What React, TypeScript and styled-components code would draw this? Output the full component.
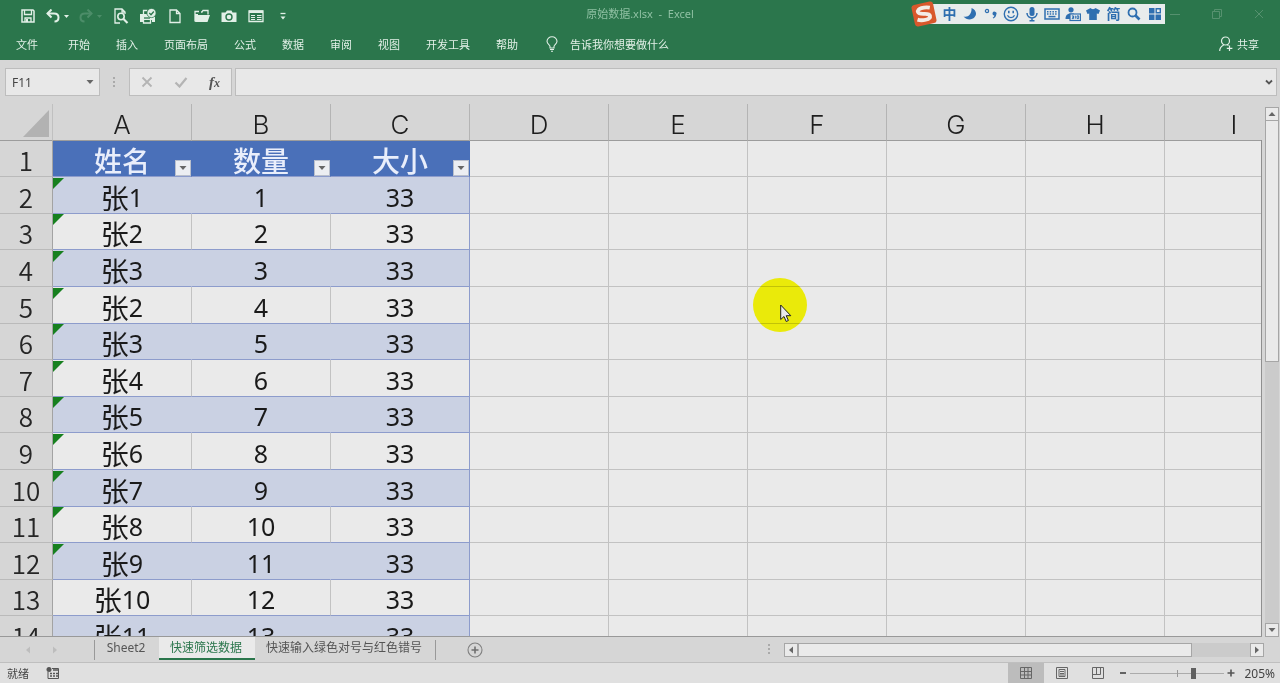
import React from 'react';
import styled, { createGlobalStyle, css } from 'styled-components';

const GREEN = '#2b764c';
const CHROME = '#d6d6d6';
const PAPER = '#eaeaea';
const LINE = '#c2c2c2';
const TABLE_LINE = '#8d9ccc';
const UI_FONT = '"Noto Sans", "Noto Sans CJK SC", sans-serif';
const HEAD_W = 53;
const COL_W = 139;

const Global = createGlobalStyle`
  *, *::before, *::after { box-sizing: border-box; }
  body { margin: 0; background: ${CHROME}; font-family: ${UI_FONT}; }
  button, input { font: inherit; color: inherit; }
  button { padding: 0; border: 0; background: none; display: flex; align-items: center; justify-content: center; }
  svg { display: block; flex: none; }
`;

const Window = styled.div`
  position: relative;
  display: flex;
  flex-direction: column;
  height: 100vh;
  overflow: hidden;
  font-size: 11px;
  color: #333;
`;

/* ---------- title bar and ribbon ---------- */

const Header = styled.header`
  flex: none;
  background: ${GREEN};
  color: #e2f0e7;
`;

const TitleBar = styled.div`
  display: grid;
  grid-template-columns: 1fr auto 1fr;
  height: 30px;
`;

const QuickAccess = styled.div`
  display: flex;
  padding: 2px 0 0 14px;
`;

const QuickButton = styled.button<{ $wide?: boolean; $dim?: boolean }>`
  width: ${p => (p.$wide ? 33 : 27)}px;
  height: 28px;
  ${p => p.$dim && css`color: #4c8d69;`}
`;

const Title = styled.h1`
  margin: 0;
  font-size: 11px;
  font-weight: 400;
  line-height: 28px;
  white-space: pre;
  color: #8fc0a3;
`;

const WindowButtons = styled.div`
  display: flex;
  justify-content: flex-end;
  color: #56916f;
`;

const WindowButton = styled.button`
  width: 42px;
  height: 28px;
`;

const Ribbon = styled.nav`
  display: flex;
  height: 30px;
  padding: 0 7px 0 3px;
`;

const RibbonTab = styled.button`
  height: 28px;
  padding: 0 13px;
`;

const FileTab = styled(RibbonTab)`
  margin-right: 4px;
`;

const TellMe = styled.button`
  height: 28px;
  gap: 12px;
  padding: 0 15px;
`;

const Share = styled.button`
  height: 28px;
  gap: 4px;
  margin-left: auto;
  padding: 0 14px;
`;

/* ---------- input method bar ---------- */

const ImeBar = styled.div`
  position: absolute;
  top: 0;
  right: 115px;
  display: flex;
  align-items: center;
  height: 28px;
  color: #2f6fb0;
`;

const ImeLogo = styled.button`
  position: relative;
  z-index: 1;
  margin-right: -13px;
`;

const ImeKeys = styled.div`
  display: flex;
  align-items: center;
  height: 20px;
  padding-left: 15px;
  background: #e8ecec;
`;

const ImeKey = styled.button`
  width: 21px;
  height: 20px;
  font-size: 14px;
  font-weight: 700;
  line-height: 20px;
  &:nth-child(even) { width: 20px; }
`;

/* ---------- formula bar ---------- */

const FormulaBar = styled.div`
  flex: none;
  display: flex;
  align-items: center;
  height: 44px;
  padding: 0 3px 0 5px;
`;

const Field = styled.div`
  display: flex;
  align-items: center;
  height: 28px;
  border: 1px solid #bdbdbd;
  background: #e8e8e8;
`;

const NameBox = styled(Field)`
  width: 95px;
`;

const FunctionBox = styled(Field)`
  width: 103px;
  margin-right: 3px;
`;

const FormulaBox = styled(Field)`
  flex: 1;
  min-width: 0;
`;

const FieldInput = styled.input`
  flex: 1;
  min-width: 0;
  height: 24px;
  padding: 0 6px;
  border: 0;
  outline: 0;
  background: transparent;
  font-size: 12px;
  color: #444;
`;

const FieldButton = styled.button<{ $w: number }>`
  width: ${p => p.$w}px;
  height: 26px;
`;

const Grip = styled.span`
  display: flex;
  justify-content: center;
  width: 29px;
`;

const FxMark = styled.span`
  font: italic 700 15px/20px "Liberation Serif", serif;
  color: #555;
  small { font-size: 12px; }
`;

/* ---------- sheet ---------- */

const SheetArea = styled.main`
  display: flex;
  flex: 1;
  min-height: 0;
`;

const GridPane = styled.div`
  position: relative;
  flex: 1;
  min-width: 0;
  overflow: hidden;
  margin-right: 3px;
  border-bottom: 1px solid #999;
  &::after {
    content: '';
    position: absolute;
    top: 36px;
    right: 0;
    bottom: 0;
    width: 1px;
    background: #8f8f8f;
  }
`;

const Grid = styled.table`
  width: ${HEAD_W + 9 * COL_W}px;
  table-layout: fixed;
  border-collapse: separate;
  border-spacing: 0;
  th, td { padding: 0; text-align: center; vertical-align: middle; }
`;

const Corner = styled.th`
  width: ${HEAD_W}px;
  height: 37px;
  border-right: 1px solid #c0c0c0;
  border-bottom: 1px solid #9c9c9c;
`;

const CornerButton = styled.button`
  width: 52px;
  height: 36px;
`;

const HeadLabel = styled.span`
  display: block;
  padding-top: 3px;
`;

const ColumnHead = styled.th`
  width: ${COL_W}px;
  height: 37px;
  border-right: 1px solid #b4b4b4;
  border-bottom: 1px solid #9c9c9c;
  font: 300 26px/30px Inter, sans-serif;
  color: #1e1e1e;
  ${HeadLabel} { padding-top: 6px; }
`;

const Row = styled.tr<{ $short: boolean }>`
  height: ${p => (p.$short ? 36 : 37)}px;
`;

const RowHead = styled.th`
  border-right: 1px solid #a3a3a3;
  border-bottom: 1px solid #bababa;
  font: 350 26px/32px "Noto Sans CJK SC", sans-serif;
  color: #262626;
`;

const Cell = styled.td<{ $band?: boolean; $table?: boolean; $edge?: boolean }>`
  border-right: 1px solid ${p => (p.$edge ? TABLE_LINE : p.$band ? '#cad1e3' : LINE)};
  border-bottom: 1px solid ${p => (p.$table ? TABLE_LINE : LINE)};
  background: ${p => (p.$band ? '#cad1e3' : PAPER)};
  color: #1a1a1a;
`;

const CellBody = styled.div`
  position: relative;
  display: flex;
  align-items: center;
  justify-content: center;
  height: 35px;
  padding-top: 4px;
  font: 400 25px/31px "Noto Sans", sans-serif;
`;

const Han = styled.span`
  font: 400 28px/31px "Noto Sans CJK SC", sans-serif;
`;

const ErrorMark = styled.i`
  position: absolute;
  top: 0;
  left: 0;
  border-top: 11px solid #17801f;
  border-right: 11px solid transparent;
`;

const TableHead = styled.td`
  border-right: 1px solid #4a70b9;
  border-bottom: 1px solid ${TABLE_LINE};
  background: #4a70b9;
  color: #e9eefb;
`;

const TableHeadBody = styled.div`
  position: relative;
  height: 35px;
  padding-top: 4px;
  font: 500 28px/31px "Noto Sans CJK SC", sans-serif;
`;

const FilterButton = styled.button`
  position: absolute;
  right: 0;
  bottom: 0;
  width: 16px;
  height: 16px;
  border: 1px solid #b9bfcc;
  background: #eceef2;
`;

/* ---------- scroll bars ---------- */

const VScroll = styled.div`
  display: flex;
  flex-direction: column;
  width: 14px;
  margin: 3px 1px 0 0;
  background: #cbcbcb;
`;

const ScrollButton = styled.button`
  flex: none;
  width: 14px;
  height: 14px;
  border: 1px solid #a6a6a6;
  background: ${PAPER};
`;

const VThumb = styled.div`
  flex: 12;
  border: 1px solid #a6a6a6;
  border-top: 0;
  background: ${PAPER};
`;

const VTrack = styled.div`
  flex: 13;
`;

const HScroll = styled.div`
  display: flex;
  width: 480px;
  height: 14px;
  margin-right: 16px;
  background: #cbcbcb;
`;

const HThumb = styled.div`
  width: 394px;
  margin-right: auto;
  border: 1px solid #a6a6a6;
  background: ${PAPER};
`;

/* ---------- sheet tabs and status bar ---------- */

const TabBar = styled.div`
  flex: none;
  display: flex;
  align-items: center;
  height: 26px;
  border-bottom: 1px solid #bfbfbf;
`;

const TabArrows = styled.div`
  display: flex;
  align-items: center;
  width: 95px;
  height: 20px;
  padding: 0 14px;
  border-right: 1px solid #999;
`;

const ArrowButton = styled.button`
  width: 27px;
  height: 20px;
`;

const SheetTab = styled.button<{ $active?: boolean }>`
  align-self: flex-start;
  min-width: 64px;
  height: 23px;
  padding: 0 13px 0 11px;
  font-size: 12px;
  line-height: 20px;
  color: #555;
  border-bottom: 2px solid transparent;
  ${p => p.$active && css`
    background: ${PAPER};
    border-bottom-color: ${GREEN};
    color: ${GREEN};
  `}
`;

const TabDivider = styled.span`
  width: 1px;
  height: 20px;
  background: #999;
`;

const AddSheet = styled.button`
  width: 77px;
  height: 24px;
  margin-right: auto;
`;

const StatusBar = styled.footer`
  flex: none;
  display: flex;
  align-items: center;
  height: 20px;
  padding: 0 5px 0 7px;
  background: #e0e0e0;
  color: #444;
`;

const MacroButton = styled.button`
  width: 24px;
  height: 20px;
  margin: 0 auto 0 12px;
`;

const ViewButton = styled.button<{ $active?: boolean }>`
  width: 36px;
  height: 20px;
  background: ${p => (p.$active ? '#bcbcbc' : 'transparent')};
`;

const ZoomStep = styled.button`
  width: 14px;
  height: 20px;
`;

const ZoomSlider = styled.input`
  appearance: none;
  width: 94px;
  height: 20px;
  margin: 0;
  background: linear-gradient(#999, #999) center / 1px 7px no-repeat,
    linear-gradient(#ababab, #ababab) center / 100% 1px no-repeat;
  &::-webkit-slider-thumb {
    appearance: none;
    width: 5px;
    height: 11px;
    background: #606060;
  }
`;

const ZoomValue = styled.button`
  width: 37px;
  height: 20px;
  font-size: 12px;
  justify-content: flex-end;
`;

/* ---------- icons ---------- */

const Svg = ({ w = 16, h = 16, children }: { w?: number; h?: number; children: React.ReactNode }) => (
  <svg width={w} height={h} viewBox={`0 0 ${w} ${h}`} fill="none" stroke="currentColor" strokeWidth="1.3" aria-hidden="true">
    {children}
  </svg>
);

const Caret = ({ dir = 'down', color = '#666' }: { dir?: 'down' | 'up' | 'left' | 'right'; color?: string }) => {
  const d = { down: 'M.500 2h7L4 6z', up: 'M.500 6h7L4 2z', left: 'M6 .500v7L2 4z', right: 'M2 .500v7L6 4z' }[dir];
  return (
    <svg width="8" height="8" viewBox="0 0 8 8" fill={color} aria-hidden="true">
      <path d={d} />
    </svg>
  );
};

const Dots = () => (
  <svg width="3" height="11" viewBox="0 0 3 11" fill="#aaa" aria-hidden="true">
    <path d="M0 0h2v2H0zM0 4h2v2H0zM0 8h2v2H0z" />
  </svg>
);

const SaveIcon = () => (
  <Svg>
    <path d="M2 2h11l1 1V14H2z" strokeWidth="1.500" />
    <path d="M4.500 2v4.500h7V2M5 14v-4h6v4" />
    <path d="M6 11h2v3H6z" fill="currentColor" stroke="none" />
  </Svg>
);

const UndoIcon = ({ flip }: { flip?: boolean }) => (
  <Svg w={24} h={14}>
    <g transform={flip ? 'translate(14 0) scale(-1 1)' : undefined}>
      <path d="M1.500 4.500h6.500c3 0 4.500 1.800 4.500 4s-1.500 4-4 4" strokeWidth="2" />
      <path d="M5.500 .500l-4 4 4 4" strokeWidth="2" />
    </g>
    <path d="M18 6h5l-2.500 3z" fill="currentColor" stroke="none" />
  </Svg>
);

const PreviewIcon = () => (
  <Svg>
    <path d="M7 15H2V1h7l3 3v2M9 1v3h3" />
    <circle cx="8" cy="8.500" r="3.200" strokeWidth="1.600" />
    <path d="M10.500 11l4 4" strokeWidth="2.200" />
  </Svg>
);

const PrintIcon = () => (
  <Svg w={18} h={16}>
    <path d="M1 6h8l2 3h5v5h-3v-2H4v2H1z" fill="currentColor" stroke="none" />
    <path d="M4.500 6V2.500h4M4.500 11.500v3.500h7v-3.500" />
    <path d="M5 10h6" stroke={GREEN} />
    <circle cx="12.500" cy="5" r="4.600" fill="currentColor" stroke={GREEN} strokeWidth=".8" />
    <path d="M10.300 5l1.700 1.700 2.800-3.200" stroke={GREEN} />
  </Svg>
);

const NewIcon = () => (
  <Svg>
    <path d="M3 2h6.500L13 5.500V14.500H3zM9.500 2v3.500H13" />
  </Svg>
);

const OpenIcon = () => (
  <Svg>
    <path d="M1 13.500V3.500h4M7 4h1l1-1.500h5v4" />
    <path d="M1 6h3v2L1 13.500zM3.800 7H16l-2.500 7H1z" fill="currentColor" stroke="none" />
  </Svg>
);

const CameraIcon = () => (
  <Svg>
    <path d="M.500 4.500h4L6 2.500h4.500l1 2h4V14H.500z" fill="currentColor" stroke="none" />
    <circle cx="8" cy="9" r="3" stroke={GREEN} strokeWidth="1.400" />
  </Svg>
);

const FormIcon = () => (
  <Svg>
    <path d="M1 3h14v10.500H1z" />
    <path d="M1 2.500h14v2.500H1z" fill="currentColor" stroke="none" />
    <path d="M3 7.500h4M3 9.500h4M3 11.500h4M9 7.500h4.500M9 9.500h4.500M9 11.500h4.500" strokeWidth="1.200" />
  </Svg>
);

const MoreIcon = () => (
  <Svg w={8} h={10}>
    <path d="M1.500 2.500h5" />
    <path d="M1.500 5.500h5L4 8.500z" fill="currentColor" stroke="none" />
  </Svg>
);

const BulbIcon = () => (
  <Svg w={12} h={16}>
    <path d="M4 12v-1.500C4 9 1 8 1 5.300a5 4.600 0 0 1 10 0C11 8 8 9 8 10.500V12zM4 13.500h4M5 15.300h2" strokeWidth="1.100" />
  </Svg>
);

const ShareIcon = () => (
  <Svg w={14} h={16}>
    <circle cx="6.500" cy="5" r="4" strokeWidth="1.200" />
    <path d="M.700 15c0-3.500 1.800-5 4-6M8 8.500l1.500 1M10.500 9.500v5.500M7.800 12.300h5.600" strokeWidth="1.200" />
  </Svg>
);

const MoonIcon = () => (
  <Svg w={14} h={14}>
    <path d="M8.500 1c4.300 1.500 6 6 3 9.300C8.800 13.300 3.500 13.300 .500 9.500c5 1.500 8.500-3 8-8.500z" fill="currentColor" stroke="none" />
  </Svg>
);

const PunctIcon = () => (
  <Svg w={14} h={14}>
    <circle cx="3" cy="4" r="1.600" />
    <path d="M8.500 6.500a2 2 0 1 1 3.800 1c-.200 2-1.300 3.200-3 4l-.600-.800c1-.600 1.500-1.300 1.600-2.200-1 0-1.800-.900-1.800-2z" fill="currentColor" stroke="none" />
  </Svg>
);

const SmileIcon = () => (
  <Svg>
    <circle cx="8" cy="8" r="6.700" strokeWidth="1.400" />
    <path d="M5.800 4.800v2.400M10.200 4.800v2.400" strokeWidth="1.600" />
    <path d="M4.500 9.300c1.200 3 5.800 3 7 0" />
  </Svg>
);

const MicIcon = () => (
  <Svg w={12} h={16}>
    <rect x="3.500" y="1" width="5" height="9" rx="2.500" fill="currentColor" stroke="none" />
    <path d="M1 7c0 6.500 10 6.500 10 0M6 12v3M3.500 14.800h5" strokeWidth="1.500" />
  </Svg>
);

const KeyboardIcon = () => (
  <Svg>
    <rect x="1" y="3" width="14" height="10" strokeWidth="1.500" />
    <path d="M3 5.800h10M3 8h10" strokeDasharray="1.500 1.200" strokeWidth="1.400" />
    <path d="M4.500 10.600h7" strokeWidth="1.500" />
  </Svg>
);

const SkinUserIcon = () => (
  <Svg>
    <circle cx="6" cy="3.800" r="2.600" fill="currentColor" stroke="none" />
    <path d="M.500 13c0-4 2-5.500 5.500-5.500h3V13z" fill="currentColor" stroke="none" />
    <rect x="5" y="8" width="10.500" height="6.500" fill="#e8ecec" strokeWidth="1.200" />
    <path d="M6.800 9.900h1.700v2.700H6.800M7 11.200h1.500M10.300 9.700v3M12 9.900h1.700v2.700H12z" strokeWidth="1" />
  </Svg>
);

const ShirtIcon = () => (
  <Svg w={14} h={14}>
    <path d="M4.500 1c1 1.500 4 1.500 5 0L14 3.500 12.500 7l-1.700-.500V13H3.200V6.500L1.500 7 0 3.500z" fill="currentColor" stroke="none" />
  </Svg>
);

const SearchIcon = () => (
  <Svg w={14} h={14}>
    <circle cx="5.500" cy="5.500" r="4" strokeWidth="1.800" />
    <path d="M8.500 8.500l4 4" strokeWidth="2.600" />
  </Svg>
);

const TilesIcon = () => (
  <Svg w={14} h={14}>
    <path d="M1 1h5.500v5.500H1zM1 7.500h5.500V13H1zM7.500 7.500H13V13H7.500z" fill="currentColor" stroke="none" />
    <path d="M8.200 1.700h4.100v4.100H8.200z" strokeWidth="1.400" />
  </Svg>
);

const SogouIcon = () => (
  <Svg w={26} h={26}>
    <g transform="rotate(-12 13 13)" stroke="none">
      <rect x="2" y="2" width="22" height="22" rx="3" fill="#d9582c" />
      <path d="M20 8C15 6 7 6 7.500 10s11 2 11 6-9 3.500-13 1.200" fill="none" stroke="#f4ece6" strokeWidth="3.800" />
    </g>
  </Svg>
);

/* ---------- data ---------- */

const columns = ['A', 'B', 'C', 'D', 'E', 'F', 'G', 'H', 'I'];
const headings = ['姓名', '数量', '大小'];
const people = ['1', '2', '3', '2', '3', '4', '5', '6', '7', '8', '9', '10', '11'];
const shortRows = [1, 3, 6, 8, 11, 13];
const lastFlaggedRow = 12;
const ribbonTabs = ['开始', '插入', '页面布局', '公式', '数据', '审阅', '视图', '开发工具', '帮助'];

const Blanks = () => (
  <>
    {columns.slice(3).map(c => (
      <Cell key={c} />
    ))}
  </>
);

/* ---------- pointer with its highlight ---------- */

const Spot = styled.div`
  position: absolute;
  top: 278px;
  left: 753px;
  width: 54px;
  height: 54px;
  padding: 26px 0 0 27px;
  border-radius: 50%;
  background: #ffff0a;
  mix-blend-mode: multiply;
  pointer-events: none;
`;

const Pointer = () => (
  <Spot>
    <svg width="12" height="19" viewBox="0 0 12 19" aria-hidden="true">
      <path d="M.700 1v14.500l3.300-3 2.200 5 2.200-1-2.200-4.800h4.600z" fill="#fff" stroke="#222" strokeWidth="1" />
    </svg>
  </Spot>
);

export default function App() {
  return (
    <Window>
      <Global />
      <Header>
        <TitleBar>
          <QuickAccess>
            <QuickButton aria-label="保存"><SaveIcon /></QuickButton>
            <QuickButton $wide aria-label="撤消"><UndoIcon /></QuickButton>
            <QuickButton $wide $dim aria-label="恢复"><UndoIcon flip /></QuickButton>
            <QuickButton aria-label="打印预览"><PreviewIcon /></QuickButton>
            <QuickButton aria-label="快速打印"><PrintIcon /></QuickButton>
            <QuickButton aria-label="新建"><NewIcon /></QuickButton>
            <QuickButton aria-label="打开"><OpenIcon /></QuickButton>
            <QuickButton aria-label="照相机"><CameraIcon /></QuickButton>
            <QuickButton aria-label="记录单"><FormIcon /></QuickButton>
            <QuickButton aria-label="自定义"><MoreIcon /></QuickButton>
          </QuickAccess>
          <Title>{'原始数据.xlsx  -  Excel'}</Title>
          <WindowButtons>
            <WindowButton aria-label="最小化"><Svg w={12} h={12}><path d="M1 6.500h10" strokeWidth="1" /></Svg></WindowButton>
            <WindowButton aria-label="还原"><Svg w={12} h={12}><path d="M1.500 3.500h7v7h-7zM3.500 3.500v-2h7v7h-2" strokeWidth="1" /></Svg></WindowButton>
            <WindowButton aria-label="关闭"><Svg w={12} h={12}><path d="M2 2l8 8M10 2l-8 8" strokeWidth="1" /></Svg></WindowButton>
          </WindowButtons>
        </TitleBar>
        <Ribbon>
          <FileTab>文件</FileTab>
          {ribbonTabs.map(t => (
            <RibbonTab key={t}>{t}</RibbonTab>
          ))}
          <TellMe><BulbIcon />告诉我你想要做什么</TellMe>
          <Share><ShareIcon />共享</Share>
        </Ribbon>
      </Header>

      <FormulaBar>
        <NameBox>
          <FieldInput aria-label="名称框" defaultValue="F11" />
          <FieldButton $w={18} aria-label="展开名称框"><Caret /></FieldButton>
        </NameBox>
        <Grip><Dots /></Grip>
        <FunctionBox>
          <FieldButton $w={34} aria-label="取消"><Svg w={12} h={12}><path d="M1.500 1.500l9 9M10.500 1.500l-9 9" stroke="#b4b4b4" strokeWidth="1.800" /></Svg></FieldButton>
          <FieldButton $w={34} aria-label="输入"><Svg w={14} h={12}><path d="M1.500 6.500l4 4 7-8.500" stroke="#b4b4b4" strokeWidth="2.200" /></Svg></FieldButton>
          <FieldButton $w={33}><FxMark>f<small>x</small></FxMark></FieldButton>
        </FunctionBox>
        <FormulaBox>
          <FieldInput aria-label="编辑栏" />
          <FieldButton $w={14} aria-label="展开编辑栏"><Svg w={8} h={8}><path d="M1 2.500l3 3 3-3" stroke="#555" strokeWidth="1.800" /></Svg></FieldButton>
        </FormulaBox>
      </FormulaBar>

      <SheetArea>
        <GridPane>
          <Grid>
            <thead>
              <tr>
                <Corner>
                  <CornerButton aria-label="全选">
                    <svg width="52" height="36" viewBox="0 0 52 36" aria-hidden="true">
                      <path d="M23 33L49 6v27z" fill="#b2b2b2" />
                    </svg>
                  </CornerButton>
                </Corner>
                {columns.map(c => (
                  <ColumnHead key={c} scope="col"><HeadLabel>{c}</HeadLabel></ColumnHead>
                ))}
              </tr>
            </thead>
            <tbody>
              <Row $short>
                <RowHead scope="row"><HeadLabel>1</HeadLabel></RowHead>
                {headings.map(h => (
                  <TableHead key={h}>
                    <TableHeadBody>
                      {h}
                      <FilterButton aria-label="筛选"><Caret /></FilterButton>
                    </TableHeadBody>
                  </TableHead>
                ))}
                <Blanks />
              </Row>
              {people.map((n, i) => {
                const row = i + 2;
                const band = i % 2 === 0;
                return (
                  <Row key={row} $short={shortRows.includes(row)}>
                    <RowHead scope="row"><HeadLabel>{row}</HeadLabel></RowHead>
                    <Cell $table $band={band}>
                      <CellBody>
                        {row <= lastFlaggedRow && <ErrorMark />}
                        <Han>张</Han>
                        <span>{n}</span>
                      </CellBody>
                    </Cell>
                    <Cell $table $band={band}><CellBody>{i + 1}</CellBody></Cell>
                    <Cell $table $band={band} $edge><CellBody>33</CellBody></Cell>
                    <Blanks />
                  </Row>
                );
              })}
            </tbody>
          </Grid>
        </GridPane>
        <VScroll>
          <ScrollButton aria-label="向上滚动"><Caret dir="up" /></ScrollButton>
          <VThumb />
          <VTrack />
          <ScrollButton aria-label="向下滚动"><Caret /></ScrollButton>
        </VScroll>
      </SheetArea>

      <TabBar>
        <TabArrows>
          <ArrowButton aria-label="上一个工作表"><Caret dir="left" color="#bdbdbd" /></ArrowButton>
          <ArrowButton aria-label="下一个工作表"><Caret dir="right" color="#bdbdbd" /></ArrowButton>
        </TabArrows>
        <SheetTab>Sheet2</SheetTab>
        <SheetTab $active>快速筛选数据</SheetTab>
        <SheetTab>快速输入绿色对号与红色错号</SheetTab>
        <TabDivider />
        <AddSheet aria-label="新工作表">
          <Svg><circle cx="8" cy="8" r="7" stroke="#808080" strokeWidth="1.100" /><path d="M8 4.500v7M4.500 8h7" stroke="#707070" strokeWidth="1.600" /></Svg>
        </AddSheet>
        <Grip><Dots /></Grip>
        <HScroll>
          <ScrollButton aria-label="向左滚动"><Caret dir="left" /></ScrollButton>
          <HThumb />
          <ScrollButton aria-label="向右滚动"><Caret dir="right" /></ScrollButton>
        </HScroll>
      </TabBar>

      <StatusBar>
        <span>就绪</span>
        <MacroButton aria-label="录制宏">
          <Svg w={14} h={12}>
            <path d="M2 5v6.500h10.500V1.500H6" stroke="#555" strokeWidth="1" />
            <circle cx="3" cy="2.500" r="2.500" fill="#555" stroke="none" />
            <path d="M7 3h5M4 6.500h2M7 6.500h2M10 6.500h2M4 9h2M7 9h2M10 9h2" stroke="#555" />
          </Svg>
        </MacroButton>
        <ViewButton $active aria-label="普通">
          <Svg w={14} h={14}><path d="M1.500 1.500h11v11h-11zM1.500 5.500h11M1.500 9h11M5.500 1.500v11M9 1.500v11" stroke="#666" strokeWidth="1" /></Svg>
        </ViewButton>
        <ViewButton aria-label="页面布局视图">
          <Svg w={14} h={14}><path d="M1.500 1.500h11v11h-11zM4 3.500h6v7H4zM5 5.500h4M5 7.500h4M5 9h4" stroke="#666" strokeWidth="1" /></Svg>
        </ViewButton>
        <ViewButton aria-label="分页预览">
          <Svg w={14} h={14}><path d="M1.500 1.500h11v11h-11zM1.500 8.500h8v-7M5.500 1.500v7" stroke="#666" strokeWidth="1" /></Svg>
        </ViewButton>
        <ZoomStep aria-label="缩小"><Svg w={8} h={8}><path d="M1 4h6" stroke="#555" strokeWidth="1.800" /></Svg></ZoomStep>
        <ZoomSlider type="range" aria-label="缩放" min={0} max={100} defaultValue={69} />
        <ZoomStep aria-label="放大"><Svg w={8} h={8}><path d="M.500 4h7M4 .500v7" stroke="#555" strokeWidth="1.600" /></Svg></ZoomStep>
        <ZoomValue>205%</ZoomValue>
      </StatusBar>

      <ImeBar>
        <ImeLogo aria-label="输入法菜单"><SogouIcon /></ImeLogo>
        <ImeKeys>
          <ImeKey>中</ImeKey>
          <ImeKey aria-label="半角"><MoonIcon /></ImeKey>
          <ImeKey aria-label="标点"><PunctIcon /></ImeKey>
          <ImeKey aria-label="表情"><SmileIcon /></ImeKey>
          <ImeKey aria-label="语音"><MicIcon /></ImeKey>
          <ImeKey aria-label="软键盘"><KeyboardIcon /></ImeKey>
          <ImeKey aria-label="用户"><SkinUserIcon /></ImeKey>
          <ImeKey aria-label="皮肤"><ShirtIcon /></ImeKey>
          <ImeKey>简</ImeKey>
          <ImeKey aria-label="搜索"><SearchIcon /></ImeKey>
          <ImeKey aria-label="工具箱"><TilesIcon /></ImeKey>
        </ImeKeys>
      </ImeBar>

      <Pointer />
    </Window>
  );
}
